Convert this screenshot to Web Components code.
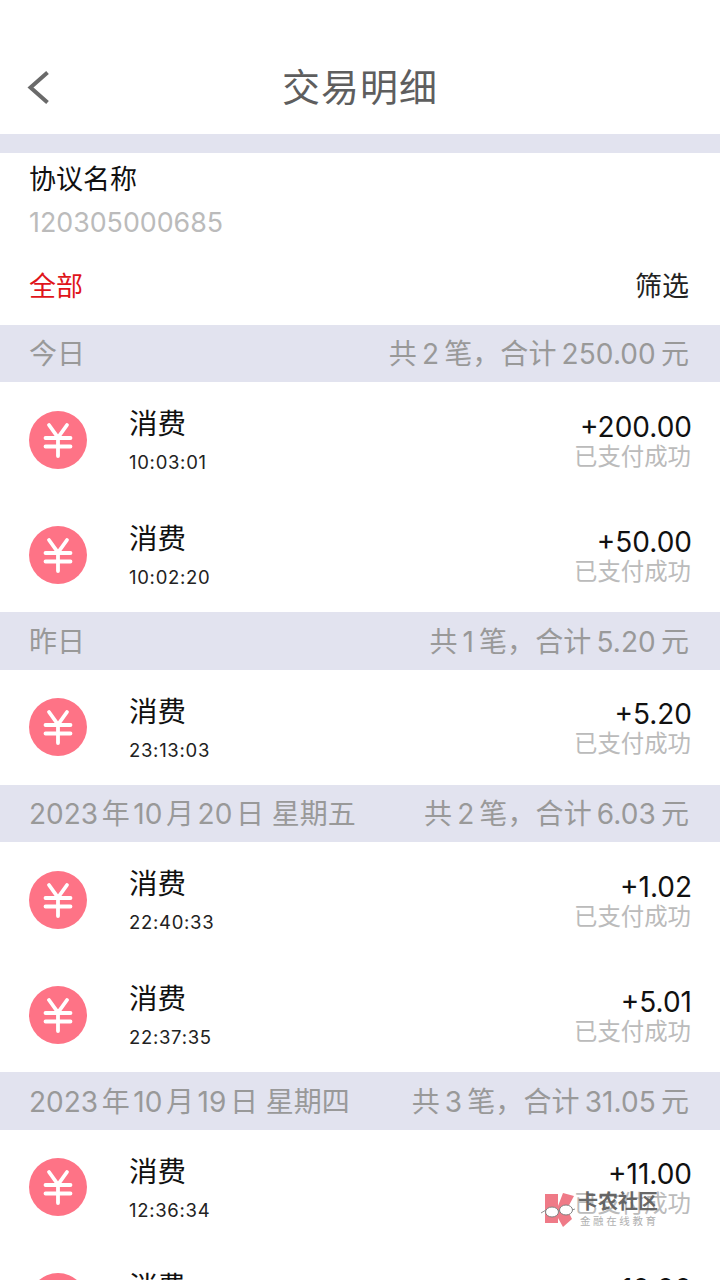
<!DOCTYPE html>
<html>
<head>
<meta charset="utf-8">
<title>交易明细</title>
<style>
  html, body {
    margin: 0;
    height: 1280px;
    overflow: hidden;
    background: #fff;
    font-family: Inter, "Noto Sans CJK SC", sans-serif;
  }
  body { position: relative; }
</style>
</head>
<body>
<nav-bar>交易明细</nav-bar>
<account-info name="协议名称" number="120305000685"></account-info>
<filter-bar></filter-bar>

<day-header label="今日" count="2" total="250.00"></day-header>
<trade-row time="10:03:01" amount="+200.00"></trade-row>
<trade-row time="10:02:20" amount="+50.00"></trade-row>

<day-header label="昨日" count="1" total="5.20"></day-header>
<trade-row time="23:13:03" amount="+5.20"></trade-row>

<day-header label="2023年10月20日 星期五" count="2" total="6.03"></day-header>
<trade-row time="22:40:33" amount="+1.02"></trade-row>
<trade-row time="22:37:35" amount="+5.01"></trade-row>

<day-header label="2023年10月19日 星期四" count="3" total="31.05"></day-header>
<trade-row time="12:36:34" amount="+11.00"></trade-row>
<trade-row time="12:30:12" amount="+10.00"></trade-row>

<water-mark></water-mark>

<script>
const FONT = 'Inter, "Noto Sans CJK SC", sans-serif';

class NavBar extends HTMLElement {
  constructor() {
    super();
    this.attachShadow({mode: 'open'}).innerHTML = `
      <style>
        :host {
          display: flex;
          align-items: center;
          justify-content: center;
          position: relative;
          height: 134px;
          box-sizing: border-box;
          padding-top: 40px;
          background: #fff;
          color: #5e5e5e;
          font: 38px/1 ${FONT};
          letter-spacing: 1px;
        }
        svg { position: absolute; left: 26px; top: 71px; }
      </style>
      <svg width="24" height="33" viewBox="0 0 24 33">
        <path d="M21.5 1.5 L4.5 16.5 L21.5 31.5" fill="none" stroke="#6a6a6a" stroke-width="4"/>
      </svg>
      <slot></slot>
    `;
  }
}

class AccountInfo extends HTMLElement {
  connectedCallback() {
    this.attachShadow({mode: 'open'}).innerHTML = `
      <style>
        :host {
          display: block;
          box-sizing: border-box;
          border-top: 19px solid #e2e3ef;
          padding: 11px 29px 0;
          height: 117px;
          background: #fff;
        }
        .name { font: 27px/32px ${FONT}; color: #111; }
        .number { font: 26.8px/32px ${FONT}; color: #bbb; margin-top: 10px; }
      </style>
      <div class="name">${this.getAttribute('name')}</div>
      <div class="number">${this.getAttribute('number')}</div>
    `;
  }
}

class FilterBar extends HTMLElement {
  constructor() {
    super();
    this.attachShadow({mode: 'open'}).innerHTML = `
      <style>
        :host {
          display: flex;
          justify-content: space-between;
          align-items: center;
          box-sizing: border-box;
          height: 73.5px;
          padding: 0 31px 2px 29px;
          font: 27px/1 ${FONT};
          background: #fff;
        }
        .all { color: #e0141a; }
        .pick { color: #222; }
      </style>
      <span class="all">全部</span>
      <span class="pick">筛选</span>
    `;
  }
}

class DayHeader extends HTMLElement {
  connectedCallback() {
    // digits get a little air next to the CJK text, as the phone renders them
    const label = this.getAttribute('label').replace(/\d+/g, '<i>$&</i>');
    this.attachShadow({mode: 'open'}).innerHTML = `
      <style>
        :host {
          display: flex;
          justify-content: space-between;
          align-items: center;
          box-sizing: border-box;
          height: 57.5px;
          padding: 2px 31px 0 29px;
          background: #e2e3ef;
          color: #999;
          font: 28px/1 ${FONT};
        }
        i { font-style: normal; margin: 0 5px; }
        .sum { letter-spacing: .1px; }
        .day i { margin: 0 3.6px; }
        .day i:first-child { margin-left: 0; }
      </style>
      <span class="day">${label}</span>
      <span class="sum">共<i>${this.getAttribute('count')}</i>笔，合计<i>${this.getAttribute('total')}</i>元</span>
    `;
  }
}

class TradeRow extends HTMLElement {
  connectedCallback() {
    this.attachShadow({mode: 'open'}).innerHTML = `
      <style>
        :host {
          display: flex;
          align-items: center;
          height: 115px;
          padding: 0 28px 0 29px;
          background: #fff;
        }
        svg { flex: none; margin-right: 42px; }
        .left { flex: 1; padding-top: 1px; }
        .title { font: 28.5px/34px ${FONT}; color: #111; position: relative; top: 1px; }
        .time { font: 18.5px/24px ${FONT}; color: #222; margin-top: 10px; letter-spacing: .7px; }
        .right { text-align: right; }
        .amount { font: 28px/34px ${FONT}; color: #111; position: relative; top: 1px; }
        .state { font: 23.4px/28px ${FONT}; color: #bbb; margin-right: 1px; }
      </style>
      <svg width="58" height="58" viewBox="0 0 58 58">
        <circle cx="29" cy="29" r="29" fill="#fe7386"/>
        <path d="M20 14 L29 26.5 L38 14 M16.5 27 H41.5 M16.5 35.5 H41.5 M29 26.5 V45"
          fill="none" stroke="#fff" stroke-width="3.8" stroke-linecap="round"/>
      </svg>
      <div class="left">
        <div class="title">消费</div>
        <div class="time">${this.getAttribute('time')}</div>
      </div>
      <div class="right">
        <div class="amount">${this.getAttribute('amount')}</div>
        <div class="state">已支付成功</div>
      </div>
    `;
  }
}

class WaterMark extends HTMLElement {
  constructor() {
    super();
    this.attachShadow({mode: 'open'}).innerHTML = `
      <style>
        :host {
          position: absolute;
          left: 540px;
          top: 1189px;
          display: flex;
          gap: 2px;
          opacity: .92;
        }
        svg { margin-top: 3px; }
        .a { font: bold 20px/24px "Noto Sans CJK SC", sans-serif; color: #5c5c5c; }
        .b { font: 10.5px/12px "Noto Sans CJK SC", sans-serif; color: #aaa; letter-spacing: 2.6px; margin: 2px 0 0 2px; }
      </style>
      <svg width="36" height="37" viewBox="0 0 36 37">
        <path d="M5 2 H18 V14 L23 1 L34 4 L27 17 L32 27 L23 35 L18 26 V31 H5 Z" fill="#ee6f7d"/>
        <path d="M1 21 L6 18 M18 19 L20 18 M32 18 L35 17" stroke="#888" stroke-width="1" fill="none"/>
        <ellipse cx="12" cy="20" rx="6.5" ry="5" fill="#fff" stroke="#777" stroke-width="1"/>
        <ellipse cx="26" cy="18" rx="6.5" ry="5" fill="#fff" stroke="#777" stroke-width="1"/>
      </svg>
      <div>
        <div class="a">卡农社区</div>
        <div class="b">金融在线教育</div>
      </div>
    `;
  }
}

customElements.define('nav-bar', NavBar);
customElements.define('account-info', AccountInfo);
customElements.define('filter-bar', FilterBar);
customElements.define('day-header', DayHeader);
customElements.define('trade-row', TradeRow);
customElements.define('water-mark', WaterMark);
</script>
</body>
</html>
